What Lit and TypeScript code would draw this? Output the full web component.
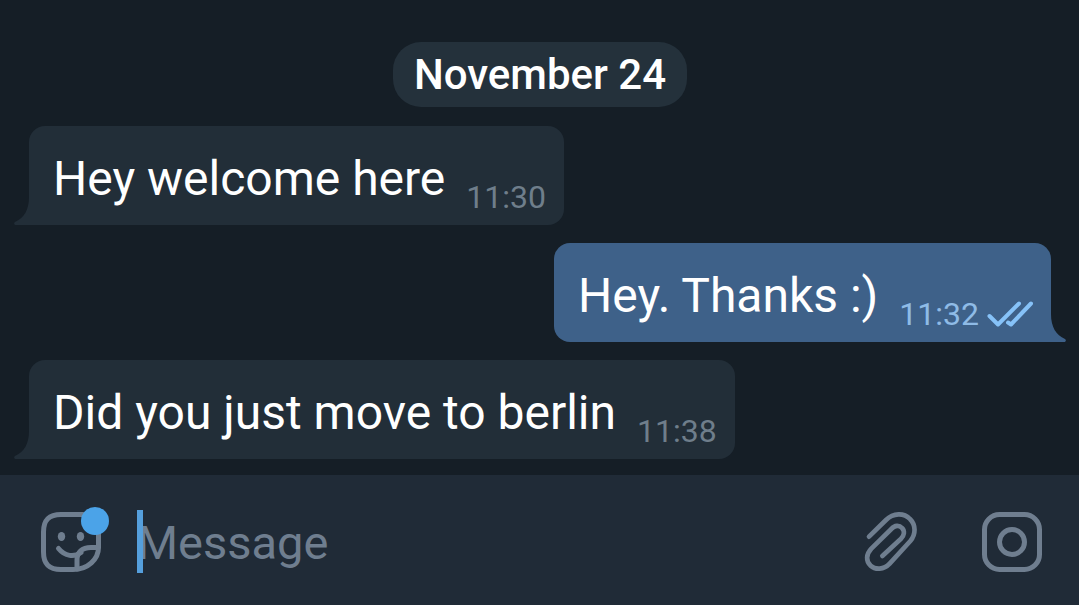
import { LitElement, html, css, svg, nothing } from "lit";
import { customElement, property } from "lit/decorators.js";

interface Message {
  text: string;
  time: string;
  outgoing: boolean;
}

const MESSAGES: Message[] = [
  { text: "Hey welcome here", time: "11:30", outgoing: false },
  { text: "Hey. Thanks :)", time: "11:32", outgoing: true },
  { text: "Did you just move to berlin", time: "11:38", outgoing: false },
];

const checks = html`<svg class="checks" width="46" height="26" viewBox="0 0 46 26" role="img" aria-label="Read">
  ${svg`<path d="M2.5 15 L11 23.5 L32 2.5 M21 21.5 L24 23.5 L44 2.5" />`}
</svg>`;

@customElement("chat-message")
export class ChatMessage extends LitElement {
  @property() text = "";
  @property() time = "";
  @property({ type: Boolean, reflect: true }) outgoing = false;

  static styles = css`
    :host {
      display: flex;
      --bubble: #222e38;
      --meta: #6f7e8b;
    }
    :host([outgoing]) {
      justify-content: flex-end;
      --bubble: #3e6189;
      --meta: #8fbbe6;
    }
    .bubble {
      position: relative;
      display: flex;
      align-items: flex-end;
      gap: 21px;
      padding: 25px 18px 9px 24px;
      border-radius: 16px 16px 16px 0;
      background: var(--bubble);
      color: #fff;
    }
    :host([outgoing]) .bubble {
      border-radius: 16px 16px 0 16px;
    }
    .text {
      margin: 0;
      padding-bottom: 9px;
      font-size: 48px;
      line-height: 56px;
    }
    .meta {
      display: flex;
      align-items: center;
      gap: 8px;
      color: var(--meta);
      font-size: 32px;
      line-height: 38px;
    }
    .tail {
      position: absolute;
      bottom: 0;
      right: 100%;
      fill: var(--bubble);
    }
    :host([outgoing]) .tail {
      right: auto;
      left: 100%;
      transform: scaleX(-1);
    }
    .checks {
      fill: none;
      stroke: #86c2f8;
      stroke-width: 4;
      stroke-linecap: round;
      stroke-linejoin: round;
    }
  `;

  render() {
    return html`
      <div class="bubble">
        <svg class="tail" width="15" height="28" viewBox="0 0 15 28" aria-hidden="true">
          <path d="M15 0 C15 13 10 21 1 25 C-0.5 26 0 28 2 28 H15 Z" />
        </svg>
        <p class="text">${this.text}</p>
        <span class="meta">
          <time>${this.time}</time>
          ${this.outgoing ? checks : nothing}
        </span>
      </div>
    `;
  }
}

@customElement("message-bar")
export class MessageBar extends LitElement {
  static styles = css`
    :host {
      display: flex;
      align-items: center;
      padding: 33px 34px 31px;
      background: #202b37;
    }
    button {
      display: flex;
      padding: 0;
      border: 0;
      background: none;
      color: #6f7e8f;
      cursor: pointer;
    }
    svg {
      overflow: visible;
      fill: none;
      stroke: currentColor;
      stroke-width: 5;
      stroke-linecap: round;
      stroke-linejoin: round;
    }
    .clip {
      stroke-width: 14;
    }
    .solid {
      fill: currentColor;
      stroke: none;
    }
    .badge {
      fill: #4ba3e8;
      stroke: none;
    }
    .field {
      position: relative;
      display: flex;
      flex: 1;
      min-width: 0;
      margin-left: 30px;
    }
    input {
      flex: 1;
      box-sizing: border-box;
      min-width: 0;
      height: 66px;
      padding: 3px 0 0;
      border: 0;
      outline: 0;
      background: none;
      color: #fff;
      font: inherit;
      font-size: 47px;
      caret-color: #4ba3e8;
    }
    input::placeholder {
      color: #6f7e8f;
      opacity: 1;
    }
    .caret {
      position: absolute;
      left: 0;
      top: 2px;
      bottom: 1px;
      width: 6px;
      background: #559fdc;
    }
    .actions {
      display: flex;
      gap: 52px;
    }
  `;

  render() {
    return html`
      <button type="button" aria-label="Stickers">
        <svg width="73" height="66" viewBox="0 0 73 66">
          <path
            d="M64.500 30 V22 C64.500 11 59 6.500 48 6.500 H27 C15 6.500 9.500 12 9.500 24 V44 C9.500 56 15 61.500 27 61.500 H39 C54 61.500 64.500 51 64.500 39.500 Z"
          />
          <path d="M64 39.500 H57 C48 39.500 43 44 43 52 V61" />
          <path d="M24.500 40.500 C31 48.500 40 49.500 47 44.500" />
          <ellipse class="solid" cx="27.500" cy="28.500" rx="3.700" ry="4.600" />
          <ellipse class="solid" cx="46.500" cy="28.500" rx="3.700" ry="4.600" />
          <circle class="badge" cx="61" cy="13" r="14" />
        </svg>
      </button>
      <div class="field">
        <input type="text" placeholder="Message" aria-label="Message" />
        <span class="caret"></span>
      </div>
      <div class="actions">
        <button type="button" aria-label="Attach file">
          <svg width="66" height="66" viewBox="33 39 198 198">
            <path
              class="clip"
              d="M57 125 L108 75 C130 53 162 53 180 72 C198 90 198 118 181 138 L119 206 C101 225 76 225 62 212 C47 198 48 178 64 161 L124 102 C134 90 148 90 156 99 C165 108 163 122 153 131 L97 183"
            />
          </svg>
        </button>
        <button type="button" aria-label="Camera">
          <svg width="66" height="66" viewBox="0 0 66 66">
            <rect x="5.500" y="6.500" width="55" height="55" rx="15" />
            <circle cx="33" cy="34" r="12.500" />
          </svg>
        </button>
      </div>
    `;
  }
}

@customElement("app-root")
export class AppRoot extends LitElement {
  static styles = css`
    :host {
      display: flex;
      flex-direction: column;
      min-height: 100vh;
      background: #151e26;
      font-family: Roboto, "Noto Sans", sans-serif;
    }
    .history {
      flex: 1;
      display: flex;
      flex-direction: column;
      justify-content: flex-end;
      gap: 19px;
      padding: 40px 28px 16px 29px;
    }
    .day {
      display: flex;
      flex-direction: column;
      gap: 18px;
    }
    .date {
      align-self: center;
      margin: 0;
      padding: 8px 21px;
      border-radius: 28px;
      background: #24313b;
      color: #fff;
      font-size: 42px;
      font-weight: 500;
      line-height: 49px;
    }
  `;

  render() {
    return html`
      <main class="history">
        <h2 class="date">November 24</h2>
        <div class="day">
          ${MESSAGES.map(
            (m) => html`<chat-message .text=${m.text} .time=${m.time} ?outgoing=${m.outgoing}></chat-message>`
          )}
        </div>
      </main>
      <message-bar></message-bar>
    `;
  }
}
